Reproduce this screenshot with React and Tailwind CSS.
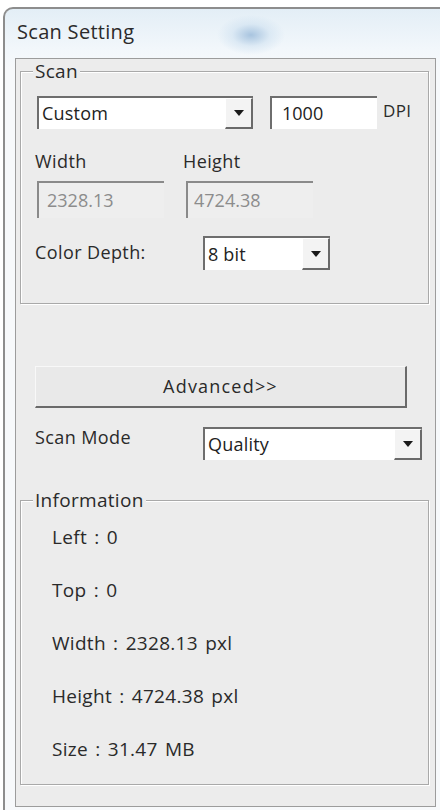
import React from "react";

const font = { fontFamily: '"Open Sans", "Noto Sans", sans-serif' };

function Arrow() {
  return (
    <svg width="10" height="6" viewBox="0 0 10 6">
      <path d="M0 0 L10 0 L5 6 Z" fill="#1a1a1a" />
    </svg>
  );
}

function Combo({ value, className }) {
  return (
    <div className={`flex h-[33px] border-t-2 border-l-2 border-[#6e6e6e] bg-white ${className}`}>
      <div className="flex-1 flex items-center pl-[3px] text-[18px] tracking-[0.2px] text-[#222222]">{value}</div>
      <div className="w-[28px] flex items-center justify-center bg-[#f3f3f3] border-r-2 border-b-2 border-[#6a6a6a] border-t border-l border-t-white border-l-white">
        <Arrow />
      </div>
    </div>
  );
}

function Group({ label, className, children }) {
  return (
    <div className={`relative border border-[#a9a9a9] shadow-[inset_1px_1px_0_#ffffff,1px_1px_0_#ffffff] ${className}`}>
      <span className="absolute -top-[13px] left-[12px] bg-[#ececec] px-[2px] text-[19px] leading-[24px] tracking-[0.3px] text-[#2a2a2a]">
        {label}
      </span>
      {children}
    </div>
  );
}

export default function App() {
  return (
    <div className="w-[440px] h-[810px] bg-white overflow-hidden pt-[7px] pl-[3px]" style={font}>
      <div className="w-[445px] h-[803px] rounded-tl-[10px] border-l-2 border-t-2 border-[#8d8d8d] bg-[linear-gradient(180deg,#e3eef6_0px,#f2f7fb_40px,#f7f9fb_60px)] flex flex-col">
        <div className="h-[49px] flex items-center pl-[12px] bg-[radial-gradient(ellipse_34px_20px_at_246px_26px,#a8c4df_0%,rgba(205,224,240,0.55)_55%,transparent_100%)]">
          <span className="text-[20px] tracking-[0.3px] text-[#2b2b2b] leading-none -mt-[4px]">Scan Setting</span>
        </div>
        <div className="ml-[10px] w-[421px] h-[749px] border border-[#9c9c9c] bg-[#ececec] flex flex-col">
          <Group label="Scan" className="mt-[12px] ml-[4px] w-[409px] h-[233px] flex flex-col pl-[16px]">
            <div className="mt-[24px] flex items-center">
              <Combo value="Custom" className="w-[216px]" />
              <div className="ml-[17px] w-[107px] h-[33px] border-t-2 border-l-2 border-[#6e6e6e] bg-white flex items-center pl-[10px] text-[18px] text-[#222222]">
                1000
              </div>
              <span className="ml-[6px] -mt-[4px] text-[17px] tracking-[0.3px] text-[#2a2a2a]">DPI</span>
            </div>
            <div className="mt-[21px] flex text-[18px] leading-[22px] tracking-[0.4px] text-[#2a2a2a]">
              <span className="w-[148px] -ml-[2px]">Width</span>
              <span>Height</span>
            </div>
            <div className="mt-[9px] flex">
              <div className="w-[127px] h-[37px] border-t-2 border-l-2 border-[#8a8a8a] bg-[#eeeeee] flex items-center pl-[8px] text-[18px] text-[#8c8c8c]">
                2328.13
              </div>
              <div className="ml-[22px] w-[127px] h-[37px] border-t-2 border-l-2 border-[#8a8a8a] bg-[#eeeeee] flex items-center pl-[6px] text-[18px] text-[#8c8c8c]">
                4724.38
              </div>
            </div>
            <div className="mt-[18px] flex items-center">
              <span className="w-[168px] -ml-[2px] -mt-[2px] text-[18px] tracking-[0.4px] text-[#2a2a2a]">Color Depth:</span>
              <Combo value="8 bit" className="w-[127px] !h-[34px]" />
            </div>
          </Group>
          <button className="mt-[62px] ml-[19px] w-[372px] h-[42px] bg-[#e9e9e9] border-t border-l border-t-[#f8f8f8] border-l-[#f8f8f8] border-r-2 border-b-2 border-r-[#6a6a6a] border-b-[#6a6a6a] flex items-center justify-center text-[18px] tracking-[1.2px] text-[#2a2a2a]">
            Advanced&gt;&gt;
          </button>
          <div className="mt-[19px] ml-[19px] flex items-start">
            <span className="w-[168px] -mt-[3px] text-[18px] tracking-[0.4px] text-[#2a2a2a]">Scan Mode</span>
            <Combo value="Quality" className="w-[219px]" />
          </div>
          <Group label="Information" className="mt-[40px] ml-[4px] w-[409px] h-[285px] flex flex-col pl-[31px] pt-[25px] gap-[31px] text-[19px] leading-[22px] font-medium tracking-[0.3px] [word-spacing:2px] text-[#2a2a2a]">
            <span>Left : 0</span>
            <span>Top : 0</span>
            <span>Width : 2328.13 pxl</span>
            <span>Height : 4724.38 pxl</span>
            <span>Size : 31.47 MB</span>
          </Group>
        </div>
      </div>
    </div>
  );
}
